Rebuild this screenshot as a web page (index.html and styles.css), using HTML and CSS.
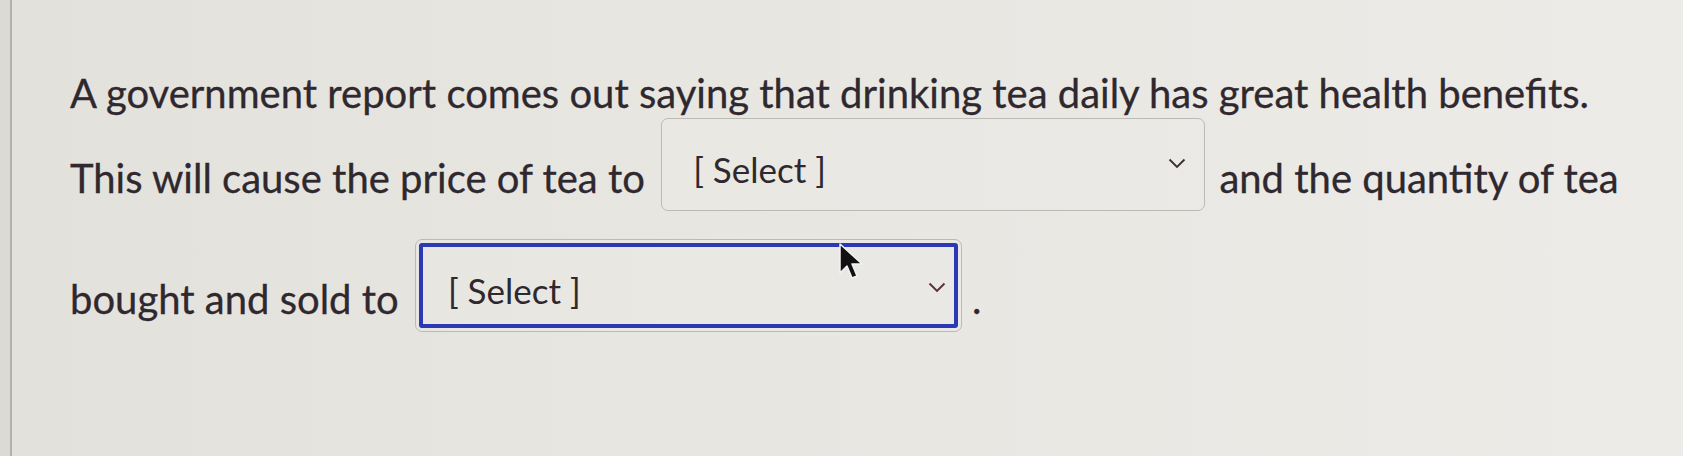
FILE: index.html
```html
<!DOCTYPE html>
<html lang="en">
<head>
  <meta charset="UTF-8" />
  <title>Question</title>
  <link rel="stylesheet" href="styles.css">
</head>
<body>
  <div class="edge"></div>

  <div class="question">
    <div class="line line-first">A government report comes out saying that drinking tea daily has great health benefits.</div>

    <div class="line line-second">This will cause the price of tea to
      <span class="select">
        <span class="select-text">[ Select ]</span>
        <svg class="chevron" width="18" height="11" viewBox="0 0 18 11"><path d="M1.5 1.5 L9 9 L16.5 1.5" fill="none" stroke="#3a3137" stroke-width="1.9"/></svg>
      </span>
      and the quantity of tea</div>

    <div class="line line-third">bought and sold to
      <span class="select focused">
        <span class="select-text">[ Select ]</span>
        <svg class="chevron" width="18" height="11" viewBox="0 0 18 11"><path d="M1.5 1.5 L9 9 L16.5 1.5" fill="none" stroke="#5a2f3a" stroke-width="1.9"/></svg>
      </span><span class="dot">.</span></div>
  </div>

  <!-- mouse pointer left on screen -->
  <svg class="pointer" width="26" height="38" viewBox="0 0 26 38">
    <path d="M2 1 L2 30 L9 23 L14 35 L19 33 L14 21 L24 21 Z" fill="#111" stroke="#f2f2f2" stroke-width="1.5" stroke-linejoin="round"/>
  </svg>
</body>
</html>
```

FILE: styles.css
```css
* {
  margin: 0;
  padding: 0;
  box-sizing: border-box;
}

body {
  font-family: 'Lato', 'Noto Sans', sans-serif;
  background: linear-gradient(90deg, #e3e1dc 0%, #e8e6e1 40%, #edebe7 100%);
  color: #2f282e;
  height: 100vh;
  overflow: hidden;
  display: flex;
  position: relative;
}

.edge {
  width: 12px;
  flex-shrink: 0;
  background: #dcdad5;
  border-right: 2px solid #b3b1ac;
}

.question {
  padding: 69px 0 0 58px;
  font-size: 40px;
  line-height: 1.2;
  white-space: nowrap;
  -webkit-text-stroke: 0.3px #2f282e;
}

.line-second {
  margin-top: 1px;
}

.line-third {
  margin-top: 28px;
}

.select {
  display: inline-flex;
  align-items: flex-start;
  vertical-align: 10px;
  width: 544px;
  height: 93px;
  margin: 0 4px 0 6px;
  padding: 29px 18px 0 31px;
  border: 1.5px solid #bdbab5;
  border-radius: 7px;
  background: rgba(255, 255, 255, 0.08);
}

.select-text {
  font-size: 35px;
  line-height: 1.2;
  -webkit-text-stroke: 0;
}

.chevron {
  margin-left: auto;
  margin-top: 10px;
}

.select.focused {
  width: 547px;
  margin: 0 4px 0 6px;
  padding-left: 32px;
  outline: 4px solid #2b39b4;
  outline-offset: -8px;
}

.select.focused .chevron {
  margin-top: 13px;
  margin-right: -3px;
}

.dot {
  margin-left: 6px;
}

.pointer {
  position: absolute;
  left: 838px;
  top: 243px;
}
```
